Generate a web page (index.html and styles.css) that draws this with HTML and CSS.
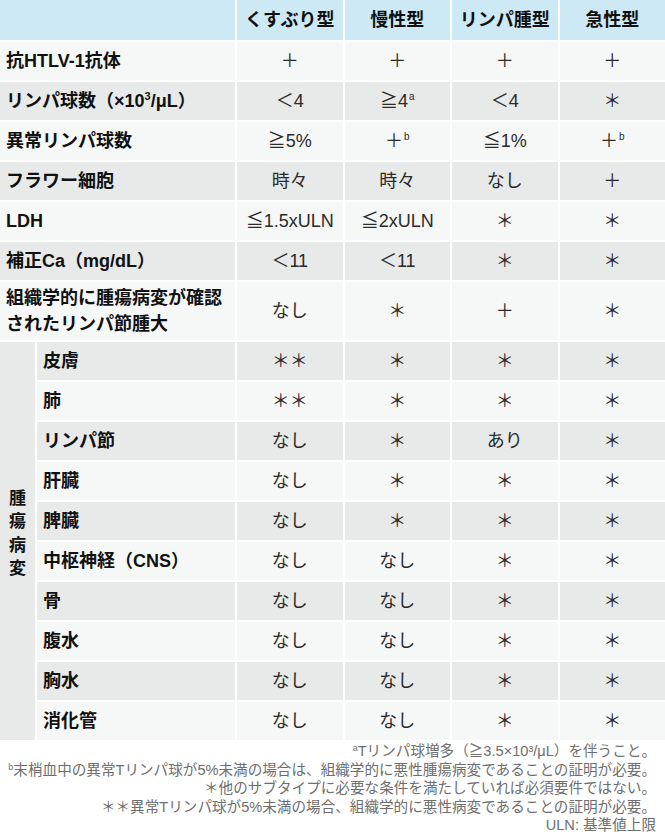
FILE: index.html
```html
<!DOCTYPE html>
<html lang="ja">
<head>
<meta charset="utf-8">
<link rel="stylesheet" href="styles.css">
</head>
<body>
<div class="wrap">
<table class="atl">
  <colgroup>
    <col class="c-group"><col class="c-label"><col class="c-val"><col class="c-val"><col class="c-val"><col class="c-val">
  </colgroup>
  <thead>
    <tr class="head">
      <th colspan="2"></th>
      <th>くすぶり型</th>
      <th>慢性型</th>
      <th>リンパ腫型</th>
      <th>急性型</th>
    </tr>
  </thead>
  <tbody>
    <tr class="lt"><th colspan="2">抗HTLV-1抗体</th><td>＋</td><td>＋</td><td>＋</td><td>＋</td></tr>
    <tr class="dk"><th colspan="2">リンパ球数（×10<sup class="cube">3</sup>/μL）</th><td>＜4</td><td>≧4<sup>a</sup></td><td>＜4</td><td>＊</td></tr>
    <tr class="lt"><th colspan="2">異常リンパ球数</th><td>≧5%</td><td>＋<sup>b</sup></td><td>≦1%</td><td>＋<sup>b</sup></td></tr>
    <tr class="dk"><th colspan="2">フラワー細胞</th><td>時々</td><td>時々</td><td>なし</td><td>＋</td></tr>
    <tr class="lt"><th colspan="2">LDH</th><td>≦1.5xULN</td><td>≦2xULN</td><td>＊</td><td>＊</td></tr>
    <tr class="dk"><th colspan="2">補正Ca（mg/dL）</th><td>＜11</td><td>＜11</td><td>＊</td><td>＊</td></tr>
    <tr class="lt tall"><th colspan="2">組織学的に腫瘍病変が確認<br>されたリンパ節腫大</th><td>なし</td><td>＊</td><td>＋</td><td>＊</td></tr>
    <tr class="dk"><th class="group" rowspan="10"><span class="vtext">腫瘍病変</span></th><th>皮膚</th><td>＊＊</td><td>＊</td><td>＊</td><td>＊</td></tr>
    <tr class="lt"><th>肺</th><td>＊＊</td><td>＊</td><td>＊</td><td>＊</td></tr>
    <tr class="dk"><th>リンパ節</th><td>なし</td><td>＊</td><td>あり</td><td>＊</td></tr>
    <tr class="lt"><th>肝臓</th><td>なし</td><td>＊</td><td>＊</td><td>＊</td></tr>
    <tr class="dk"><th>脾臓</th><td>なし</td><td>＊</td><td>＊</td><td>＊</td></tr>
    <tr class="lt"><th>中枢神経（CNS）</th><td>なし</td><td>なし</td><td>＊</td><td>＊</td></tr>
    <tr class="dk"><th>骨</th><td>なし</td><td>なし</td><td>＊</td><td>＊</td></tr>
    <tr class="lt"><th>腹水</th><td>なし</td><td>なし</td><td>＊</td><td>＊</td></tr>
    <tr class="dk"><th>胸水</th><td>なし</td><td>なし</td><td>＊</td><td>＊</td></tr>
    <tr class="lt"><th>消化管</th><td>なし</td><td>なし</td><td>＊</td><td>＊</td></tr>
  </tbody>
</table>
</div>
<div class="notes">
  <p><sup>a</sup>Tリンパ球増多（≧3.5×10³/μL）を伴うこと。</p>
  <p><sup>b</sup>末梢血中の異常Tリンパ球が5%未満の場合は、組織学的に悪性腫瘍病変であることの証明が必要。</p>
  <p>＊他のサブタイプに必要な条件を満たしていれば必須要件ではない。</p>
  <p>＊＊異常Tリンパ球が5%未満の場合、組織学的に悪性病変であることの証明が必要。</p>
  <p>ULN: 基準値上限</p>
</div>
</body>
</html>
```

FILE: styles.css
```css
html, body {
  margin: 0;
  padding: 0;
  background: #ffffff;
}

body {
  width: 665px;
  font-family: "Liberation Sans", "Noto Sans CJK JP", sans-serif;
  overflow: hidden;
}

.wrap {
  width: 665px;
  overflow: hidden;
}

.atl {
  table-layout: fixed;
  border-collapse: separate;
  border-spacing: 2px;
  margin: -2px;
  width: 669px;
}

.c-group { width: 35px; }
.c-label { width: 198px; }

.atl th,
.atl td {
  padding: 0;
  height: 38px;
  line-height: 26px;
  font-size: 18px;
  color: #2b2b2b;
  vertical-align: middle;
}

.head th {
  background: #cde9f6;
  text-align: center;
  font-weight: bold;
  color: #111111;
  height: 40px;
}

.atl tbody th {
  text-align: left;
  font-weight: bold;
  color: #111111;
  padding-left: 6px;
}

.atl td {
  text-align: center;
  font-weight: normal;
}

.lt th, .lt td { background: #f6f7f7; }
.dk th, .dk td { background: #e8e9e9; }

.tall th, .tall td { height: 58px; }

.atl tbody th.group {
  background: #e8e9e9;
  padding: 0;
  text-align: center;
  vertical-align: middle;
}

.vtext {
  display: inline-block;
  width: 18px;
  line-height: 23.5px;
  font-size: 17px;
  word-break: break-all;
  margin-top: -14px;
}

.atl sup {
  font-size: 10px;
  line-height: 0;
  vertical-align: 7px;
  margin-left: 1px;
}

.atl sup.cube {
  font-size: 11px;
  margin-left: 0;
}

.notes {
  padding: 2px 9px 0 0;
  text-align: right;
  color: #6e6e6e;
  font-size: 14.6px;
  white-space: nowrap;
}

.notes p {
  margin: 0;
  line-height: 18.6px;
}

.notes sup {
  font-size: 9px;
  line-height: 0;
  vertical-align: 5px;
}
```
